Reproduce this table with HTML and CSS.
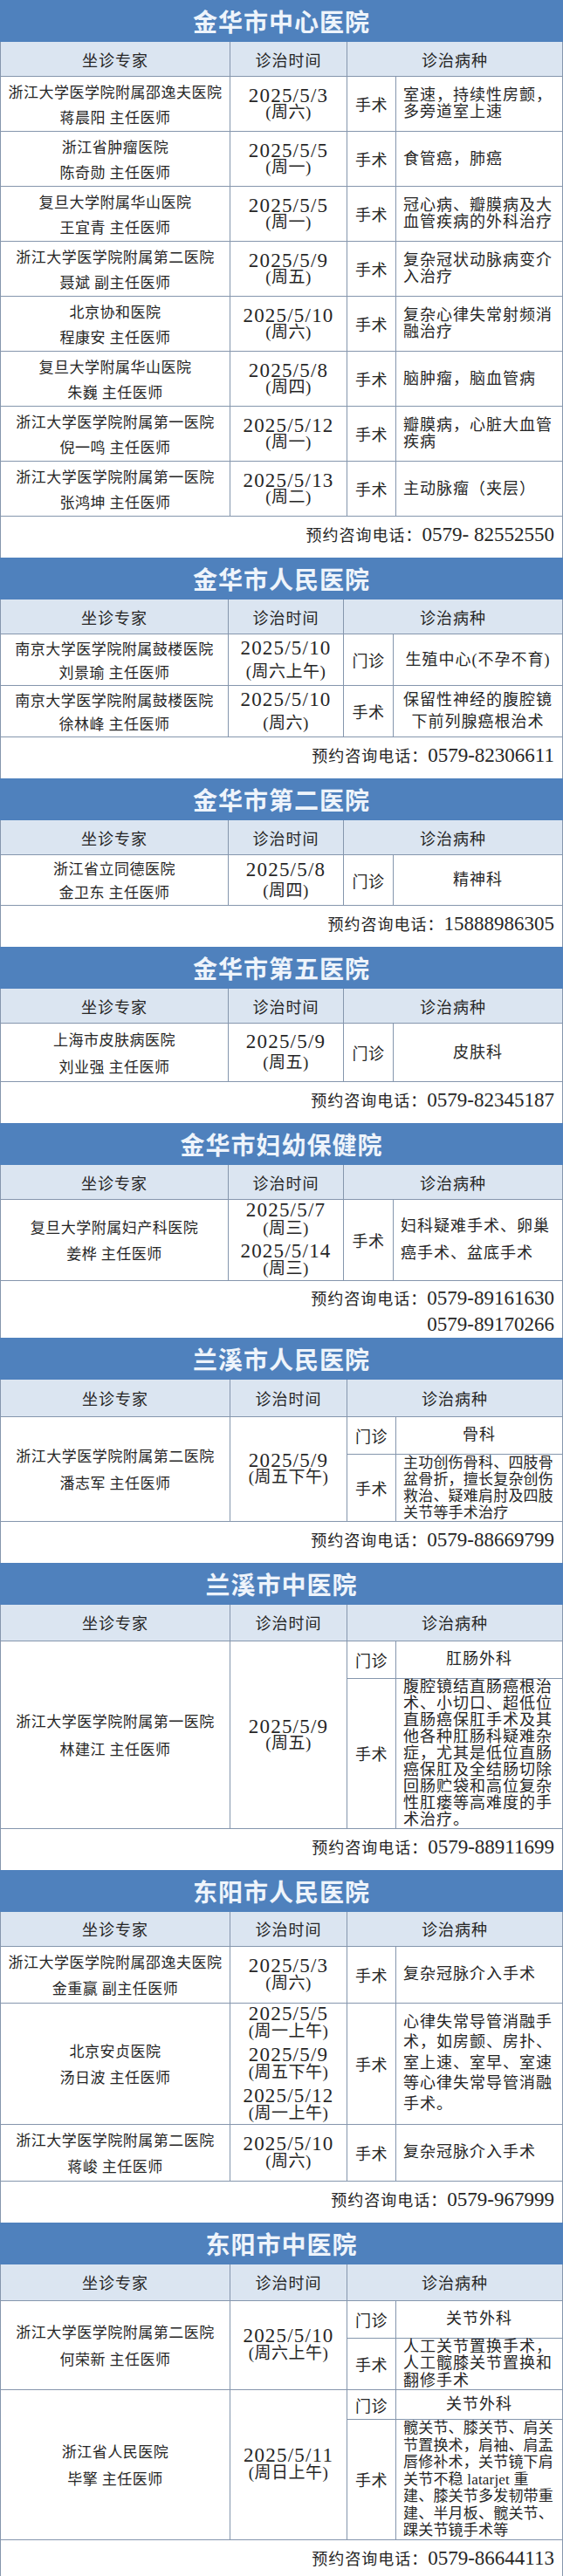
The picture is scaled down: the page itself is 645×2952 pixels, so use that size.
FILE: index.html
```html
<!DOCTYPE html>
<html lang="zh-CN">
<head>
<meta charset="utf-8">
<title>专家坐诊安排</title>
<link rel="stylesheet" href="styles.css">
</head>
<body>
<main class="page">

<section class="hosp s1">
  <h2 class="hosp-title">金华市中心医院</h2>
  <div class="row row--head"><div class="cell">坐诊专家</div><div class="cell">诊治时间</div><div class="cell">诊治病种</div></div>
  <div class="row">
    <div class="cell doc"><p>浙江大学医学院附属邵逸夫医院</p><p>蒋晨阳 主任医师</p></div>
    <div class="cell date"><p>2025/5/3<br>(周六)</p></div>
    <div class="cell kind">手术</div>
    <div class="cell dis"><p>室速，持续性房颤，<br>多旁道室上速</p></div>
  </div>
  <div class="row">
    <div class="cell doc"><p>浙江省肿瘤医院</p><p>陈奇勋 主任医师</p></div>
    <div class="cell date"><p>2025/5/5<br>(周一)</p></div>
    <div class="cell kind">手术</div>
    <div class="cell dis"><p>食管癌，肺癌</p></div>
  </div>
  <div class="row">
    <div class="cell doc"><p>复旦大学附属华山医院</p><p>王宜青 主任医师</p></div>
    <div class="cell date"><p>2025/5/5<br>(周一)</p></div>
    <div class="cell kind">手术</div>
    <div class="cell dis"><p>冠心病、瓣膜病及大<br>血管疾病的外科治疗</p></div>
  </div>
  <div class="row">
    <div class="cell doc"><p>浙江大学医学院附属第二医院</p><p>聂斌 副主任医师</p></div>
    <div class="cell date"><p>2025/5/9<br>(周五)</p></div>
    <div class="cell kind">手术</div>
    <div class="cell dis"><p>复杂冠状动脉病变介<br>入治疗</p></div>
  </div>
  <div class="row">
    <div class="cell doc"><p>北京协和医院</p><p>程康安 主任医师</p></div>
    <div class="cell date"><p>2025/5/10<br>(周六)</p></div>
    <div class="cell kind">手术</div>
    <div class="cell dis"><p>复杂心律失常射频消<br>融治疗</p></div>
  </div>
  <div class="row">
    <div class="cell doc"><p>复旦大学附属华山医院</p><p>朱巍 主任医师</p></div>
    <div class="cell date"><p>2025/5/8<br>(周四)</p></div>
    <div class="cell kind">手术</div>
    <div class="cell dis"><p>脑肿瘤，脑血管病</p></div>
  </div>
  <div class="row">
    <div class="cell doc"><p>浙江大学医学院附属第一医院</p><p>倪一鸣 主任医师</p></div>
    <div class="cell date"><p>2025/5/12<br>(周一)</p></div>
    <div class="cell kind">手术</div>
    <div class="cell dis"><p>瓣膜病，心脏大血管<br>疾病</p></div>
  </div>
  <div class="row">
    <div class="cell doc"><p>浙江大学医学院附属第一医院</p><p>张鸿坤 主任医师</p></div>
    <div class="cell date"><p>2025/5/13<br>(周二)</p></div>
    <div class="cell kind">手术</div>
    <div class="cell dis"><p>主动脉瘤（夹层）</p></div>
  </div>
  <div class="phone"><p><span class="phone-label">预约咨询电话：</span>0579- 82552550</p></div>
</section>

<section class="hosp hosp--narrow s2">
  <h2 class="hosp-title">金华市人民医院</h2>
  <div class="row row--head"><div class="cell">坐诊专家</div><div class="cell">诊治时间</div><div class="cell">诊治病种</div></div>
  <div class="row">
    <div class="cell doc"><p>南京大学医学院附属鼓楼医院</p><p>刘景瑜 主任医师</p></div>
    <div class="cell date"><p>2025/5/10<br>(周六上午)</p></div>
    <div class="cell kind">门诊</div>
    <div class="cell dis dis--center"><p>生殖中心(不孕不育)</p></div>
  </div>
  <div class="row">
    <div class="cell doc"><p>南京大学医学院附属鼓楼医院</p><p>徐林峰 主任医师</p></div>
    <div class="cell date"><p>2025/5/10<br>(周六)</p></div>
    <div class="cell kind">手术</div>
    <div class="cell dis dis--center"><p>保留性神经的腹腔镜<br>下前列腺癌根治术</p></div>
  </div>
  <div class="phone"><p><span class="phone-label">预约咨询电话：</span>0579-82306611</p></div>
</section>

<section class="hosp hosp--narrow s3">
  <h2 class="hosp-title">金华市第二医院</h2>
  <div class="row row--head"><div class="cell">坐诊专家</div><div class="cell">诊治时间</div><div class="cell">诊治病种</div></div>
  <div class="row">
    <div class="cell doc"><p>浙江省立同德医院</p><p>金卫东 主任医师</p></div>
    <div class="cell date"><p>2025/5/8<br>(周四)</p></div>
    <div class="cell kind">门诊</div>
    <div class="cell dis dis--center"><p>精神科</p></div>
  </div>
  <div class="phone"><p><span class="phone-label">预约咨询电话：</span>15888986305</p></div>
</section>

<section class="hosp hosp--narrow s4">
  <h2 class="hosp-title">金华市第五医院</h2>
  <div class="row row--head"><div class="cell">坐诊专家</div><div class="cell">诊治时间</div><div class="cell">诊治病种</div></div>
  <div class="row">
    <div class="cell doc"><p>上海市皮肤病医院</p><p>刘业强 主任医师</p></div>
    <div class="cell date"><p>2025/5/9<br>(周五)</p></div>
    <div class="cell kind">门诊</div>
    <div class="cell dis dis--center"><p>皮肤科</p></div>
  </div>
  <div class="phone"><p><span class="phone-label">预约咨询电话：</span>0579-82345187</p></div>
</section>

<section class="hosp hosp--narrow s5">
  <h2 class="hosp-title">金华市妇幼保健院</h2>
  <div class="row row--head"><div class="cell">坐诊专家</div><div class="cell">诊治时间</div><div class="cell">诊治病种</div></div>
  <div class="row">
    <div class="cell doc"><p>复旦大学附属妇产科医院</p><p>姜桦 主任医师</p></div>
    <div class="cell date"><p>2025/5/7<br>(周三)</p><p>2025/5/14<br>(周三)</p></div>
    <div class="cell kind">手术</div>
    <div class="cell dis"><p>妇科疑难手术、卵巢<br>癌手术、盆底手术</p></div>
  </div>
  <div class="phone phone--two"><p><span class="phone-label">预约咨询电话：</span>0579-89161630</p><p>0579-89170266</p></div>
</section>

<section class="hosp s6">
  <h2 class="hosp-title">兰溪市人民医院</h2>
  <div class="row row--head"><div class="cell">坐诊专家</div><div class="cell">诊治时间</div><div class="cell">诊治病种</div></div>
  <div class="row row--split">
    <div class="cell doc"><p>浙江大学医学院附属第二医院</p><p>潘志军 主任医师</p></div>
    <div class="cell date"><p>2025/5/9<br>(周五下午)</p></div>
    <div class="subs">
      <div class="sub sub--clinic"><div class="cell kind">门诊</div><div class="cell dis dis--center"><p>骨科</p></div></div>
      <div class="sub"><div class="cell kind">手术</div><div class="cell dis dis--dense"><p>主功创伤骨科、四肢骨<br>盆骨折，擅长复杂创伤<br>救治、疑难肩肘及四肢<br>关节等手术治疗</p></div></div>
    </div>
  </div>
  <div class="phone"><p><span class="phone-label">预约咨询电话：</span>0579-88669799</p></div>
</section>

<section class="hosp s7">
  <h2 class="hosp-title">兰溪市中医院</h2>
  <div class="row row--head"><div class="cell">坐诊专家</div><div class="cell">诊治时间</div><div class="cell">诊治病种</div></div>
  <div class="row row--split">
    <div class="cell doc"><p>浙江大学医学院附属第一医院</p><p>林建江 主任医师</p></div>
    <div class="cell date"><p>2025/5/9<br>(周五)</p></div>
    <div class="subs">
      <div class="sub sub--clinic"><div class="cell kind">门诊</div><div class="cell dis dis--center"><p>肛肠外科</p></div></div>
      <div class="sub"><div class="cell kind">手术</div><div class="cell dis"><p>腹腔镜结直肠癌根治<br>术、小切口、超低位<br>直肠癌保肛手术及其<br>他各种肛肠科疑难杂<br>症，尤其是低位直肠<br>癌保肛及全结肠切除<br>回肠贮袋和高位复杂<br>性肛瘘等高难度的手<br>术治疗。</p></div></div>
    </div>
  </div>
  <div class="phone"><p><span class="phone-label">预约咨询电话：</span>0579-88911699</p></div>
</section>

<section class="hosp s8">
  <h2 class="hosp-title">东阳市人民医院</h2>
  <div class="row row--head"><div class="cell">坐诊专家</div><div class="cell">诊治时间</div><div class="cell">诊治病种</div></div>
  <div class="row">
    <div class="cell doc"><p>浙江大学医学院附属邵逸夫医院</p><p>金重赢 副主任医师</p></div>
    <div class="cell date"><p>2025/5/3<br>(周六)</p></div>
    <div class="cell kind">手术</div>
    <div class="cell dis"><p>复杂冠脉介入手术</p></div>
  </div>
  <div class="row">
    <div class="cell doc"><p>北京安贞医院</p><p>汤日波 主任医师</p></div>
    <div class="cell date date--multi"><p>2025/5/5<br>(周一上午)</p><p>2025/5/9<br>(周五下午)</p><p>2025/5/12<br>(周一上午)</p></div>
    <div class="cell kind">手术</div>
    <div class="cell dis dis--loose"><p>心律失常导管消融手<br>术，如房颤、房扑、<br>室上速、室早、室速<br>等心律失常导管消融<br>手术。</p></div>
  </div>
  <div class="row">
    <div class="cell doc"><p>浙江大学医学院附属第二医院</p><p>蒋峻 主任医师</p></div>
    <div class="cell date"><p>2025/5/10<br>(周六)</p></div>
    <div class="cell kind">手术</div>
    <div class="cell dis"><p>复杂冠脉介入手术</p></div>
  </div>
  <div class="phone"><p><span class="phone-label">预约咨询电话：</span>0579-967999</p></div>
</section>

<section class="hosp s9">
  <h2 class="hosp-title">东阳市中医院</h2>
  <div class="row row--head"><div class="cell">坐诊专家</div><div class="cell">诊治时间</div><div class="cell">诊治病种</div></div>
  <div class="row row--split">
    <div class="cell doc"><p>浙江大学医学院附属第二医院</p><p>何荣新 主任医师</p></div>
    <div class="cell date"><p>2025/5/10<br>(周六上午)</p></div>
    <div class="subs">
      <div class="sub sub--clinic"><div class="cell kind">门诊</div><div class="cell dis dis--center"><p>关节外科</p></div></div>
      <div class="sub"><div class="cell kind">手术</div><div class="cell dis"><p>人工关节置换手术，<br>人工髋膝关节置换和<br>翻修手术</p></div></div>
    </div>
  </div>
  <div class="row row--split">
    <div class="cell doc"><p>浙江省人民医院</p><p>毕擎 主任医师</p></div>
    <div class="cell date"><p>2025/5/11<br>(周日上午)</p></div>
    <div class="subs">
      <div class="sub sub--clinic sub--short"><div class="cell kind">门诊</div><div class="cell dis dis--center"><p>关节外科</p></div></div>
      <div class="sub"><div class="cell kind">手术</div><div class="cell dis dis--dense"><p>髋关节、膝关节、肩关<br>节置换术，肩袖、肩盂<br>唇修补术，关节镜下肩<br>关节不稳 latarjet 重<br>建、膝关节多发韧带重<br>建、半月板、髋关节、<br>踝关节镜手术等</p></div></div>
    </div>
  </div>
  <div class="phone"><p><span class="phone-label">预约咨询电话：</span>0579-86644113</p></div>
</section>

</main>
</body>
</html>
```

FILE: styles.css
```css
:root {
  --blue: #4f81bd;
  --title-ink: #eef4fb;
  --head-bg: #dbe5f1;
  --line: #8596ad;
  --ink: #262626;
  --cn: "Noto Sans CJK SC", sans-serif;
  --num: "Liberation Serif", "Noto Sans CJK SC", serif;
}

* { box-sizing: border-box; }

html, body {
  margin: 0;
  padding: 0;
  background: #fff;
}

body {
  color: var(--ink);
  font-family: var(--cn);
}

p { margin: 0; }

.page {
  width: 645px;
  border-left: 1px solid var(--line);
  border-right: 1px solid var(--line);
  border-bottom: 1px solid var(--line);
}

/* ---------- hospital block ---------- */
.hosp {
  --c1: 263px;
  --c2: 134px;
  --c3: 56px;
  --th-h: 39px;
  --doc-lh: 29px;
  --date-lh: 19px;
  --date-gap: 6px;
  --dis-lh: 19px;
}

.hosp--narrow {
  --c1: 261px;
  --c2: 132px;
  --c3: 57px;
}

.s1 { --doc-lh: 29px; --date-lh: 19px; --dis-lh: 19px; }
.s2 { --doc-lh: 27px; --date-lh: 27px; --dis-lh: 25px; }
.s3 { --doc-lh: 26.5px; --date-lh: 24px; }
.s4 { --doc-lh: 31px; --date-lh: 24px; }
.s5 { --doc-lh: 30px; --date-lh: 20.5px; --date-gap: 5.5px; --dis-lh: 31px; }
.s6 { --doc-lh: 31px; --date-lh: 19px; --dis-lh: 19px; --th-h: 42px; }
.s7 { --doc-lh: 32px; --date-lh: 19px; --dis-lh: 19px; --th-h: 41px; }
.s8 { --doc-lh: 30px; --date-lh: 20px; --date-gap: 7px; --dis-lh: 19px; }
.s9 { --doc-lh: 31px; --date-lh: 20px; --dis-lh: 19.5px; --th-h: 41px; }

.hosp-title {
  margin: 0 -1px;
  height: 48px;
  background: var(--blue);
  color: var(--title-ink);
  font: 700 28px/48px var(--cn);
  letter-spacing: 1px;
  text-align: center;
}

/* ---------- table rows ---------- */
.row {
  display: grid;
  grid-template-columns: var(--c1) var(--c2) var(--c3) 1fr;
  border-bottom: 1px solid var(--line);
}

.row--head {
  grid-template-columns: var(--c1) var(--c2) 1fr;
  min-height: calc(var(--th-h) + 1px);
  background: var(--head-bg);
  font-size: 18px;
  letter-spacing: 1px;
}

.row--split {
  grid-template-columns: var(--c1) var(--c2) 1fr;
}

.cell {
  display: flex;
  flex-direction: column;
  align-items: center;
  justify-content: center;
  text-align: center;
  padding: 2px 4px;
  border-right: 1px solid var(--line);
}

.cell:last-child { border-right: 0; }

.doc {
  font-size: 17px;
  letter-spacing: 0.5px;
}
.doc p { line-height: var(--doc-lh); white-space: nowrap; }

/* date cell: first line is the date, second line the weekday */
.date p {
  font-family: var(--num);
  font-size: 19px;
  line-height: var(--date-lh);
  letter-spacing: 0.5px;
  white-space: nowrap;
}
.date p::first-line {
  font-size: 23px;
  letter-spacing: 1.2px;
}
.date p + p { margin-top: var(--date-gap); }

.kind {
  font-size: 18px;
  letter-spacing: 0.5px;
  padding: 0;
}

.dis {
  align-items: flex-start;
  text-align: left;
  padding: 0 2px 0 8px;
  font-family: var(--num);
  font-size: 18px;
  letter-spacing: 1px;
}
.dis p { line-height: var(--dis-lh); }

.dis--center {
  align-items: center;
  text-align: center;
  padding-left: 2px;
}

.dis--dense {
  font-size: 17px;
  letter-spacing: 0.2px;
}

.dis--loose { --dis-lh: 23.5px; }

/* ---------- split sub-rows (门诊 / 手术) ---------- */
.subs {
  display: flex;
  flex-direction: column;
}

.sub {
  display: grid;
  grid-template-columns: var(--c3) 1fr;
  flex: 1 1 auto;
}

.sub + .sub { border-top: 1px solid var(--line); }

.sub--clinic {
  flex: 0 0 auto;
  min-height: 42px;
}

.sub--short { min-height: 33px; }

/* ---------- phone line ---------- */
.phone {
  min-height: 47px;
  padding: 6px 9px 0 0;
  text-align: right;
  font: 23px/28px var(--num);
}

.phone-label {
  font-family: var(--cn);
  font-size: 18px;
  letter-spacing: 1px;
}

.phone--two {
  min-height: 65px;
  padding-top: 4px;
}
.phone--two p { line-height: 30px; }
```
